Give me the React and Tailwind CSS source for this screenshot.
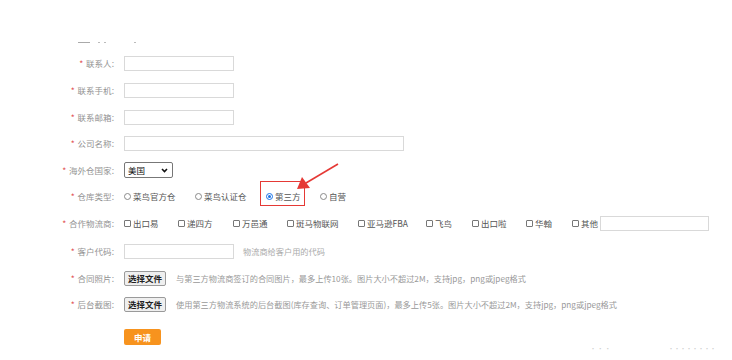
import React from 'react'

const font = { fontFamily: '"Noto Sans CJK SC", "Noto Sans", sans-serif' }

const Label = ({ children }) => (
  <div className="flex w-[114px] shrink-0 items-center justify-end gap-[3px] text-[8.5px] text-[#939393]">
    <span className="text-[#e25555]">*</span>
    <span>{children}:</span>
  </div>
)

const Row = ({ label, h, children }) => (
  <div className={`flex items-center ${h}`}>
    <Label>{label}</Label>
    <div className="ml-[10px] flex items-center">{children}</div>
  </div>
)

const TextBox = ({ w = 'w-[110px]' }) => (
  <input readOnly className={`${w} h-[15px] border border-[#d9d9d9] bg-white outline-none`} />
)

const Radio = ({ checked, children, w }) => (
  <div className={`flex items-center gap-[2px] ${w}`}>
    {checked ? (
      <span className="flex h-[7px] w-[7px] items-center justify-center rounded-full border border-[#1a73e8] bg-white">
        <span className="h-[3px] w-[3px] rounded-full bg-[#1a73e8]" />
      </span>
    ) : (
      <span className="h-[7px] w-[7px] rounded-full border border-[#8a8a8a] bg-white" />
    )}
    <span className="text-[8.5px] text-[#555]">{children}</span>
  </div>
)

const Check = ({ children, w }) => (
  <div className={`flex items-center gap-[2px] ${w}`}>
    <span className="h-[7px] w-[7px] rounded-[1px] border border-[#777] bg-white" />
    <span className="text-[8.5px] text-[#555]">{children}</span>
  </div>
)

const FileButton = () => (
  <div className="flex h-[15px] w-[42px] items-center justify-center rounded-[2px] border border-[#9a9a9a] bg-[#efefef] text-[8.5px] font-bold text-[#222]">
    选择文件
  </div>
)

export default function App() {
  return (
    <div className="relative h-[360px] w-[732px] overflow-hidden bg-white" style={font}>
      <div className="flex h-[50px] items-end pb-[7px] pl-[78px] text-[#bbb]">
        <span className="h-px w-[12px] bg-[#aaa]" />
        <span className="ml-[8px] h-px w-[2px] bg-[#bbb]" />
        <span className="ml-[4px] h-px w-[2px] bg-[#bbb]" />
        <span className="ml-[28px] h-px w-[2px] bg-[#bbb]" />
      </div>

      <Row label="联系人" h="h-[27px]"><TextBox /></Row>
      <Row label="联系手机" h="h-[27px]"><TextBox /></Row>
      <Row label="联系邮箱" h="h-[26px]"><TextBox /></Row>
      <Row label="公司名称" h="h-[27px]"><TextBox w="w-[280px]" /></Row>
      <Row label="海外仓国家" h="h-[26px]">
        <div className="flex h-[16px] w-[49px] items-center justify-between rounded-[2px] border border-[#777] bg-white pl-[3px] pr-[4px] text-[8.5px] text-[#111]">
          <span>美国</span>
          <svg width="7" height="5" viewBox="0 0 7 5">
            <path d="M1 1l2.5 2.5L6 1" fill="none" stroke="#111" strokeWidth="1.6" />
          </svg>
        </div>
      </Row>
      <Row label="仓库类型" h="h-[26px]">
        <Radio w="w-[71px]">菜鸟官方仓</Radio>
        <Radio w="w-[71px]">菜鸟认证仓</Radio>
        <div className="relative w-[54px]">
          <Radio checked>第三方</Radio>
          <div className="absolute left-[-6px] top-[-9px] h-[25px] w-[45px] border-[1.5px] border-[#e53935]" />
        </div>
        <Radio>自营</Radio>
      </Row>
      <Row label="合作物流商" h="h-[28px]">
        <Check w="w-[54px]">出口易</Check>
        <Check w="w-[55px]">递四方</Check>
        <Check w="w-[54px]">万邑通</Check>
        <Check w="w-[71px]">斑马物联网</Check>
        <Check w="w-[68px]">亚马逊FBA</Check>
        <Check w="w-[46px]">飞鸟</Check>
        <Check w="w-[54px]">出口啦</Check>
        <Check w="w-[46px]">华翰</Check>
        <Check w="w-[28px]">其他</Check>
        <TextBox w="w-[109px]" />
      </Row>
      <Row label="客户代码" h="h-[28px]">
        <TextBox />
        <span className="ml-[9px] text-[8.2px] text-[#aaa]">物流商给客户用的代码</span>
      </Row>
      <Row label="合同照片" h="h-[26px]">
        <FileButton />
        <span className="ml-[10px] text-[8.2px] text-[#999]">
          与第三方物流商签订的合同图片，最多上传10张。图片大小不超过2M，支持jpg，png或jpeg格式
        </span>
      </Row>
      <Row label="后台截图" h="h-[26px]">
        <FileButton />
        <span className="ml-[10px] text-[8.2px] text-[#999]">
          使用第三方物流系统的后台截图(库存查询、订单管理页面)，最多上传5张。图片大小不超过2M，支持jpg，png或jpeg格式
        </span>
      </Row>
      <div className="flex h-[40px] items-center pl-[124px]">
        <div className="flex h-[16px] w-[37px] items-center justify-center rounded-[2px] bg-[#f7931e] text-[8.5px] font-bold text-white">
          申请
        </div>
      </div>

      <svg className="absolute left-0 top-0" width="732" height="360">
        <line x1="338" y1="164" x2="306" y2="183" stroke="#e53935" strokeWidth="1.6" />
        <polygon points="297,189 302,177 310,188" fill="#e53935" />
      </svg>

      <div className="absolute left-[590px] top-[344px] text-[6px] text-[#ccc]">· · ·</div>
      <div className="absolute left-[668px] top-[344px] text-[6px] text-[#ccc]">········</div>
    </div>
  )
}
